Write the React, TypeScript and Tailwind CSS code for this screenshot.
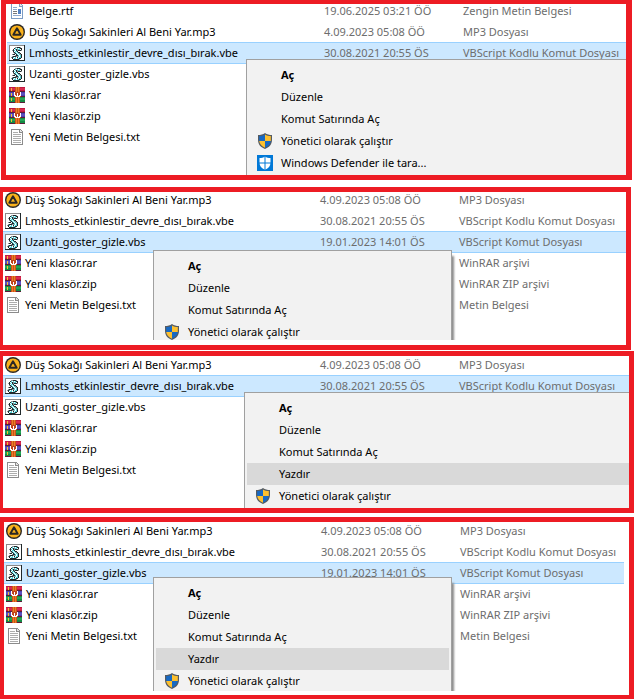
import type { ReactNode } from "react";

type Kind = "rtf" | "mp3" | "vbs" | "rar" | "txt";
type FileRow = { icon: Kind; name: string; date?: string; type?: string; selected?: boolean };
type Item = { label: string; bold?: boolean; hover?: boolean; icon?: "shield" | "defender" };

const scroll = [
  "gggggggggggggggk",
  "gwwwwwwwwwwwwwwk",
  "gwwwwwsskkkswwwk",
  "gwwwwkcwcwckkwwk",
  "gwwwkwcksccwkwwk",
  "gwwskcwkskkkswwk",
  "gwwwkwcckwwwwwwk",
  "gwwwskcwckkwwwwk",
  "gwwwwskcwcskwwwk",
  "gwwskkwkcwcskwwk",
  "gwwwwwskkcwckwwk",
  "gwwskkksscwckwwk",
  "gwskcwcwkwcckwwk",
  "gwwkwccwcckkwwwk",
  "gwwwkkkkkkswwwwk",
  "kkkkkkkkkkkkkkkk",
];
const ink: Record<string, string> = { g: "#8a8a8a", w: "#ffffff", k: "#20282a", c: "#52cfd6", s: "#8b9496" };

function FileIcon({ kind }: { kind: Kind }) {
  const base = { width: 16, height: 16, viewBox: "0 0 16 16", className: "shrink-0", "aria-hidden": true } as const;
  if (kind === "mp3")
    return (
      <svg {...base}>
        <circle cx="8" cy="8" r="8" fill="#2b2724" />
        <circle cx="8" cy="8" r="6.6" fill="#f9b11c" />
        <path d="M8 4.3 L11.7 10.8 H4.3 Z" fill="none" stroke="#2b2724" strokeWidth="1.9" strokeLinejoin="round" />
      </svg>
    );
  if (kind === "vbs")
    return (
      <svg {...base} shapeRendering="crispEdges">
        {scroll.flatMap((line, y) => [...line].map((c, x) => <rect key={`${x}-${y}`} x={x} y={y} width="1" height="1" fill={ink[c]} />))}
      </svg>
    );
  if (kind === "rar")
    return (
      <svg {...base} shapeRendering="crispEdges">
        <path d="M0 0H16V5H0Z" fill="#c2183f" />
        <path d="M0 1H16V3H0Z" fill="#d92a50" />
        <path d="M0 5H16V10H0Z" fill="#4b3fae" />
        <path d="M0 6H16V8H0Z" fill="#5d52bd" />
        <path d="M0 10H16V16H0Z" fill="#138a43" />
        <path d="M0 11H16V13H0Z" fill="#25a455" />
        <path d="M0 4H16V5H0ZM0 9H16V10H0ZM0 15H16V16H0Z" fill="#5a1c3a" />
        <path d="M2 1h1v3H2ZM2 6h1v3H2ZM2 11h1v3H2Z" fill="#f2c230" />
        <path d="M6 0h5v16H6Z" fill="#c95518" />
        <path d="M7 0h1v16H7ZM9 0h1v16H9Z" fill="#ed7b28" />
        <path d="M5 5h7v5H5Z" fill="#c0441c" />
        <path d="M5 5h1v4H5ZM11 5h1v4H11ZM6 8h1v2H6ZM10 8h1v2H10ZM8 6h1v3H8ZM7 9h3v1H7Z" fill="#fff" />
      </svg>
    );
  return (
    <svg {...base} shapeRendering="crispEdges">
      <path d="M2 0H11L14 3V16H2Z" fill={kind === "rtf" ? "#7c9cc4" : "#8b8b8b"} />
      <path d="M3 1H10V4H13V15H3Z" fill="#fff" />
      <path d="M11 1v2h2Z" fill="#e6e6e6" />
      {kind === "rtf" ? (
        <>
          <path d="M4 4h4v1H4ZM4 6h4v1H4ZM4 12h8v1H4Z" fill="#8fa9cf" />
          <path d="M4 8h4v1H4ZM4 10h4v1H4Z" fill="#777" />
          <path d="M9 6h3v5H9Z" fill="#4f7fc4" />
        </>
      ) : (
        <path d="M4 3h5v1H4ZM4 5h8v1H4ZM4 7h8v1H4ZM4 9h8v1H4ZM4 11h8v1H4ZM4 13h8v1H4Z" fill="#adadad" />
      )}
    </svg>
  );
}

function MenuIcon({ kind }: { kind: "shield" | "defender" }) {
  if (kind === "shield")
    return (
      <svg width="16" height="16" viewBox="0 0 16 16" aria-hidden="true">
        <path d="M8 0C10 1.4 12.400 2 15 2V7C15 11.500 12 14.500 8 16C4 14.500 1 11.500 1 7V2C3.600 2 6 1.400 8 0Z" fill="#555b62" />
        <path d="M8 1.500V8H2.200V3.100C4.400 3 6.300 2.500 8 1.500Z" fill="#1769c4" />
        <path d="M8 1.500V8H13.800V3.100C11.600 3 9.700 2.500 8 1.500Z" fill="#fdc02f" />
        <path d="M8 8V14.700C4.700 13.300 2.500 11 2.200 8Z" fill="#fdc02f" />
        <path d="M8 8V14.700C11.300 13.300 13.500 11 13.800 8Z" fill="#1769c4" />
      </svg>
    );
  return (
    <svg width="16" height="16" viewBox="0 0 16 16" aria-hidden="true">
      <path d="M0 0H16V16H0Z" fill="#0078d7" />
      <path d="M8 1.500C9.600 2.600 11.500 3 13.500 3V7.500C13.500 11 11.500 13.400 8 14.800C4.500 13.400 2.500 11 2.500 7.500V3C4.500 3 6.400 2.600 8 1.500Z" fill="#fff" />
      <path d="M7.500 1h1v14h-1ZM2 7.500h12v1H2Z" fill="#0078d7" />
    </svg>
  );
}

function FileTable({ rows, className }: { rows: FileRow[]; className: string }) {
  return (
    <table className={`w-full table-fixed border-separate border-spacing-0 ${className}`}>
      <colgroup>
        <col className="w-[317px]" />
        <col className="w-[139px]" />
        <col />
      </colgroup>
      <tbody>
        {rows.map((r) => {
          const cell = r.selected ? "h-[21px] p-0 bg-[#cce8ff] shadow-[inset_0_1px_0_#99d1ff,0_1px_0_#99d1ff]" : "h-[21px] p-0";
          return (
            <tr key={r.name}>
              <td className={cell}>
                <span className="ml-[2px] flex items-center gap-1">
                  <FileIcon kind={r.icon} />
                  {r.name}
                </span>
              </td>
              <td className={`${cell} text-[#6d6d6d]`}>{r.date}</td>
              <td className={`${cell} text-[#6d6d6d]`}>{r.type}</td>
            </tr>
          );
        })}
      </tbody>
    </table>
  );
}

function ContextMenu({ items, className }: { items: Item[]; className: string }) {
  return (
    <div className={`absolute overflow-hidden pr-1 ${className}`}>
      <div role="menu" className="h-full border border-b-0 border-[#a0a0a0] bg-[#f2f2f2] px-[2px] pt-1 shadow-[2px_6px_2px_#8c8c8c]">
        {items.map((it) => (
          <button
            key={it.label}
            role="menuitem"
            className={`flex h-[22px] w-full items-center text-left ${it.bold ? "font-bold" : ""} ${it.hover ? "bg-[#d9d9d9]" : ""}`}
          >
            <span className="flex w-8 shrink-0 pl-2">{it.icon && <MenuIcon kind={it.icon} />}</span>
            {it.label}
          </button>
        ))}
      </div>
    </div>
  );
}

function Panel({ className, children }: { className: string; children: ReactNode }) {
  return <section className={`relative overflow-hidden border-[#ed1c24] ${className}`}>{children}</section>;
}

const mp3: FileRow = { icon: "mp3", name: "Düş Sokağı Sakinleri Al Beni Yar.mp3", date: "4.09.2023 05:08 ÖÖ", type: "MP3 Dosyası" };
const vbe: FileRow = { icon: "vbs", name: "Lmhosts_etkinlestir_devre_dısı_bırak.vbe", date: "30.08.2021 20:55 ÖS", type: "VBScript Kodlu Komut Dosyası" };
const vbs: FileRow = { icon: "vbs", name: "Uzanti_goster_gizle.vbs" };
const vbsSelected: FileRow = { ...vbs, date: "19.01.2023 14:01 ÖS", type: "VBScript Komut Dosyası", selected: true };
const archives: FileRow[] = [
  { icon: "rar", name: "Yeni klasör.rar" },
  { icon: "rar", name: "Yeni klasör.zip" },
  { icon: "txt", name: "Yeni Metin Belgesi.txt" },
];
const typedArchives: FileRow[] = [
  { ...archives[0], type: "WinRAR arşivi" },
  { ...archives[1], type: "WinRAR ZIP arşivi" },
  { ...archives[2], type: "Metin Belgesi" },
];

const open: Item[] = [{ label: "Aç", bold: true }, { label: "Düzenle" }, { label: "Komut Satırında Aç" }];
const print: Item = { label: "Yazdır", hover: true };
const admin: Item = { label: "Yönetici olarak çalıştır", icon: "shield" };
const scan: Item = { label: "Windows Defender ile tara...", icon: "defender" };

export default function App() {
  return (
    <main className="bg-white font-['Noto_Sans','Open_Sans',sans-serif] text-[11px] leading-4 whitespace-nowrap text-black">
      <Panel className="mr-[3px] ml-px border-t-4 border-r-6 border-b-5 border-l-5 pb-7">
        <FileTable
          className="-mt-1 ml-px"
          rows={[
            { icon: "rtf", name: "Belge.rtf", date: "19.06.2025 03:21 ÖÖ", type: "Zengin Metin Belgesi" },
            mp3,
            { ...vbe, selected: true },
            vbs,
            ...archives,
          ]}
        />
        <ContextMenu className="top-[55px] -right-2 bottom-0 left-[240px]" items={[...open, admin, scan]} />
      </Panel>
      <Panel className="mt-[7px] mr-1 border-t-5 border-r-5 border-b-5 border-l-3 pb-[30px]">
        <FileTable className="-mt-[3px]" rows={[mp3, vbe, vbsSelected, ...typedArchives]} />
        <ContextMenu className="top-[58px] bottom-[5px] left-[150px] w-[303px]" items={[...open, admin]} />
      </Panel>
      <Panel className="mt-px mr-px border-t-5 border-r-5 border-b-5 border-l-3 pb-7">
        <FileTable className="-mt-[2px]" rows={[mp3, { ...vbe, selected: true }, vbs, ...archives]} />
        <ContextMenu className="top-[36px] -right-2 bottom-0 left-[241px]" items={[...open, print, admin]} />
      </Panel>
      <Panel className="mt-1 mr-px border-t-5 border-r-5 border-b-4 border-l-4 pr-[5px] pb-[49px]">
        <FileTable className="-mt-[2px]" rows={[mp3, vbe, vbsSelected, ...typedArchives]} />
        <ContextMenu className="top-[55px] bottom-1 left-[149px] w-[303px]" items={[...open, print, admin]} />
      </Panel>
    </main>
  );
}
